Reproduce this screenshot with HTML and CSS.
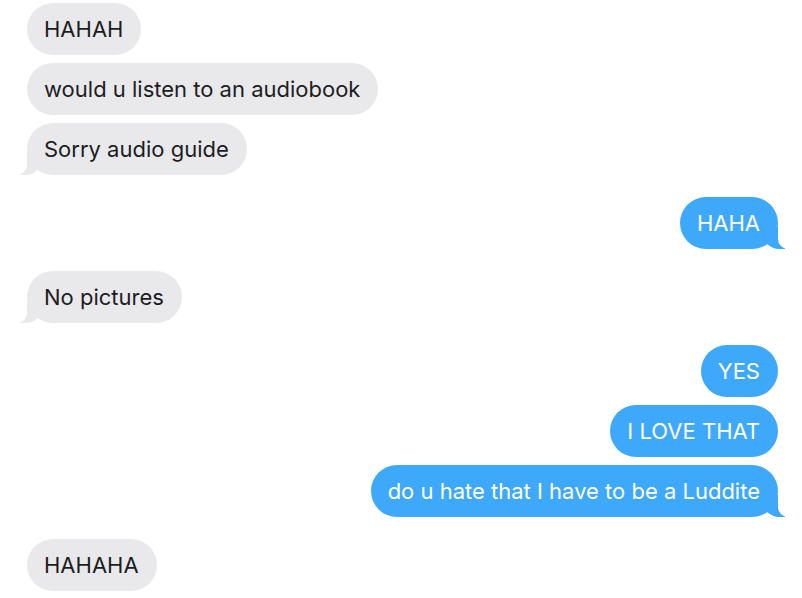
FILE: index.html
```html
<!DOCTYPE html>
<html lang="en">
<head>
  <meta charset="UTF-8" />
  <title>Messages</title>
  <link rel="stylesheet" href="styles.css">
</head>
<body>

  <div class="chat">
    <div class="group">
      <div class="msg them">HAHAH</div>
      <div class="msg them">would u listen to an audiobook</div>
      <div class="msg them tail">Sorry audio guide</div>
    </div>

    <div class="group">
      <div class="msg me tail">HAHA</div>
    </div>

    <div class="group">
      <div class="msg them tail">No pictures</div>
    </div>

    <div class="group">
      <div class="msg me">YES</div>
      <div class="msg me">I LOVE THAT</div>
      <div class="msg me tail">do u hate that I have to be a Luddite</div>
    </div>

    <div class="group">
      <div class="msg them">HAHAHA</div>
    </div>
  </div>

</body>
</html>
```

FILE: styles.css
```css
body {
  margin: 0;
  background: #fff;
  font-family: 'Inter', 'Helvetica Neue', sans-serif;
}

.chat {
  display: flex;
  flex-direction: column;
  gap: 22px;
  padding: 3px 24px 0 27px;
}

.group {
  display: flex;
  flex-direction: column;
  gap: 8px;
}

.msg {
  position: relative;
  max-width: 70%;
  padding: 14px 18px 14px 17px;
  font-size: 22px;
  line-height: 24px;
  border-radius: 26px;
  white-space: nowrap;
}

.them {
  align-self: flex-start;
  background: #e9e9eb;
  color: #1d1d1f;
}

.me {
  align-self: flex-end;
  background: #3ea8fb;
  color: #fff;
}

/* tail on the last bubble of a run */
.tail::before,
.tail::after {
  content: "";
  position: absolute;
  bottom: 0;
  height: 22px;
}

.them.tail::before {
  left: -7px;
  width: 22px;
  background: #e9e9eb;
  border-bottom-right-radius: 16px;
}

.them.tail::after {
  left: -10px;
  width: 10px;
  background: #fff;
  border-bottom-right-radius: 10px;
}

.me.tail::before {
  right: -7px;
  width: 22px;
  background: #3ea8fb;
  border-bottom-left-radius: 16px;
}

.me.tail::after {
  right: -10px;
  width: 10px;
  background: #fff;
  border-bottom-left-radius: 10px;
}
```
